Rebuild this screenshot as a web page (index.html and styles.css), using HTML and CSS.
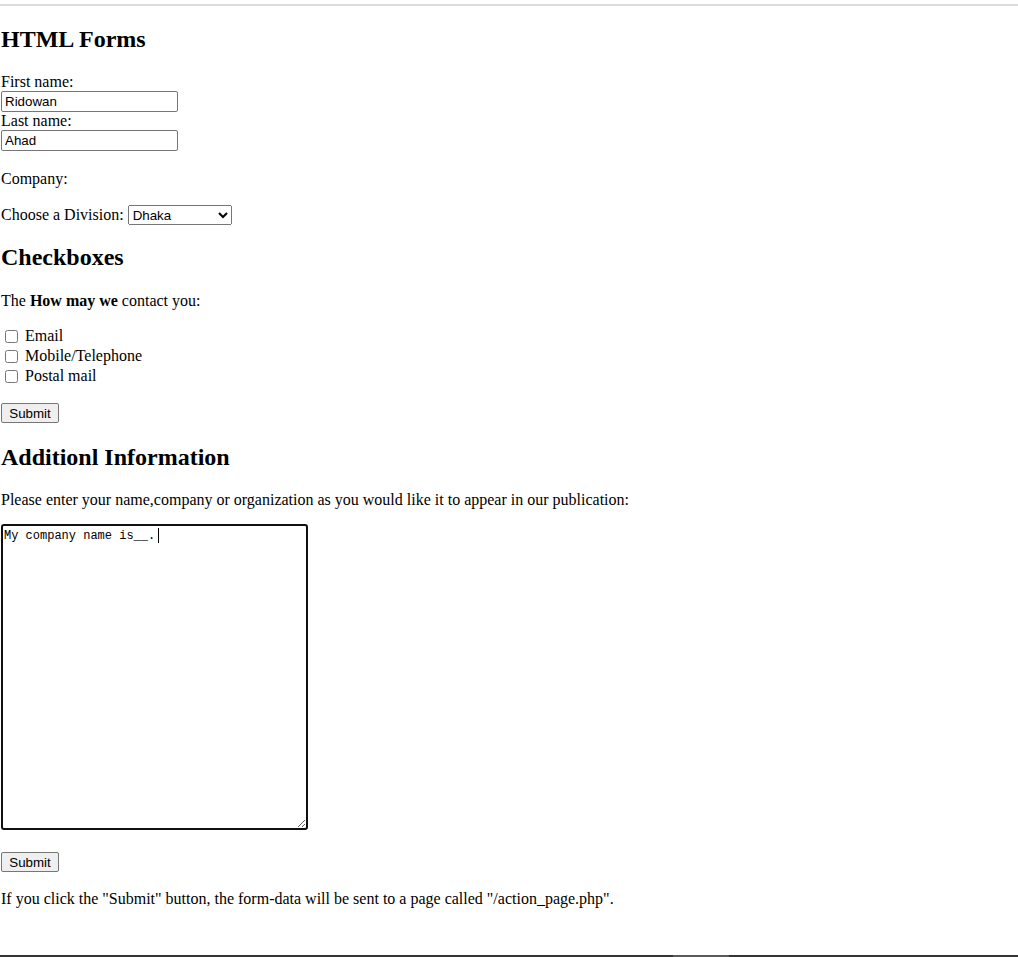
FILE: index.html
```html
<!DOCTYPE html>
<html>
<head>
<meta charset="utf-8">
<title>HTML Forms</title>
<link rel="stylesheet" href="styles.css">
</head>
<body>
<div class="topline"></div>
<main class="page">
<h2 class="first">HTML Forms</h2>
<form>
<div class="row">First name:</div>
<div class="inrow"><input class="field" type="text" value="Ridowan"></div>
<div class="row">Last name:</div>
<div class="inrow"><input class="field" type="text" value="Ahad"></div>
<p class="company">Company:</p>
<p class="divrow">Choose a Division: <select class="division"><option>Dhaka</option><option>Chittagong</option><option>Khulna</option></select></p>
<h2>Checkboxes</h2>
<p>The <b>How may we</b> contact you:</p>
<div class="checks">
<label class="check"><input type="checkbox"> Email</label>
<label class="check"><input type="checkbox"> Mobile/Telephone</label>
<label class="check"><input type="checkbox"> Postal mail</label>
</div>
<div class="btnrow1"><button class="btn" type="button">Submit</button></div>
<h2 class="addl">Additionl Information</h2>
<p class="lead">Please enter your name,company or organization as you would like it to appear in our publication:</p>
<div class="areawrap"><textarea class="area">My company name is__.</textarea><span class="caret"></span></div>
<div class="btnrow2"><button class="btn" type="button">Submit</button></div>
<p class="note">If you click the "Submit" button, the form-data will be sent to a page called "/action_page.php".</p>
</form>
</main>
<div class="bottomline"><span class="thumb"></span></div>
</body>
</html>
```
FILE: styles.css
```css
html, body {
  margin: 0;
  padding: 0;
  background: #fff;
}
body {
  font-family: "Liberation Serif", "Times New Roman", serif;
  font-size: 16px;
  line-height: 18px;
  color: #000;
}
.topline {
  height: 2px;
  margin-top: 4px;
  background: #dcdcde;
}
.page {
  padding: 0 0 0 1px;
}
h2 {
  font-size: 24px;
  line-height: 28px;
  font-weight: bold;
  margin: 18px 0 21px;
}
h2.first {
  margin-top: 19px;
  margin-bottom: 20px;
}
p {
  margin: 16px 0;
}
.row {
  height: 18px;
}
.inrow {
  display: flex;
  height: 21px;
}
.field {
  font-family: "Liberation Sans", Arial, sans-serif;
  font-size: 13.333px;
  width: 177px;
  height: 21px;
  box-sizing: border-box;
  padding: 1px 3px;
  margin: 0;
  border: 1px solid #767676;
  border-radius: 2px;
}
.company {
  margin-top: 19px;
}
.divrow {
  display: flex;
  align-items: center;
  gap: 4px;
  height: 20px;
  margin-top: 17px;
}
.division {
  font-family: "Liberation Sans", Arial, sans-serif;
  font-size: 13.333px;
  width: 104px;
  height: 20px;
  margin: 0;
}
.checks {
  margin: 16px 0;
}
.check {
  display: flex;
  align-items: center;
  height: 20px;
}
.check input {
  width: 13px;
  height: 13px;
  margin: 0 7px 0 4px;
}
.btnrow1 {
  display: flex;
  margin-top: 17px;
}
.btn {
  font-family: "Liberation Sans", Arial, sans-serif;
  font-size: 13.333px;
  width: 58px;
  padding: 0;
  margin: 0;
  height: 20px;
  border: 1px solid #767676;
  border-radius: 2px;
  background: #efefef;
  color: #000;
}
h2.addl {
  margin-top: 20px;
  margin-bottom: 20px;
}
.lead {
  margin-bottom: 15px;
}
.areawrap {
  position: relative;
  width: 307px;
  height: 306px;
}
.area {
  display: block;
  width: 307px;
  height: 306px;
  box-sizing: border-box;
  margin: 0;
  padding: 3px 1px;
  border: 2px solid #101010;
  border-radius: 3px;
  font-family: "Liberation Mono", "Courier New", monospace;
  font-size: 12px;
  line-height: 14px;
  color: #000;
  outline: none;
}
.caret {
  position: absolute;
  left: 157px;
  top: 4px;
  width: 1px;
  height: 15px;
  background: #000;
}
.btnrow2 {
  display: flex;
  margin-top: 22px;
}
.note {
  margin-top: 18px;
}
.bottomline {
  position: fixed;
  left: 0;
  right: 0;
  bottom: 0;
  height: 2px;
  background: #333;
}
.bottomline .thumb {
  position: absolute;
  left: 673px;
  top: 0;
  width: 56px;
  height: 2px;
  background: #5a5a5a;
}
```
